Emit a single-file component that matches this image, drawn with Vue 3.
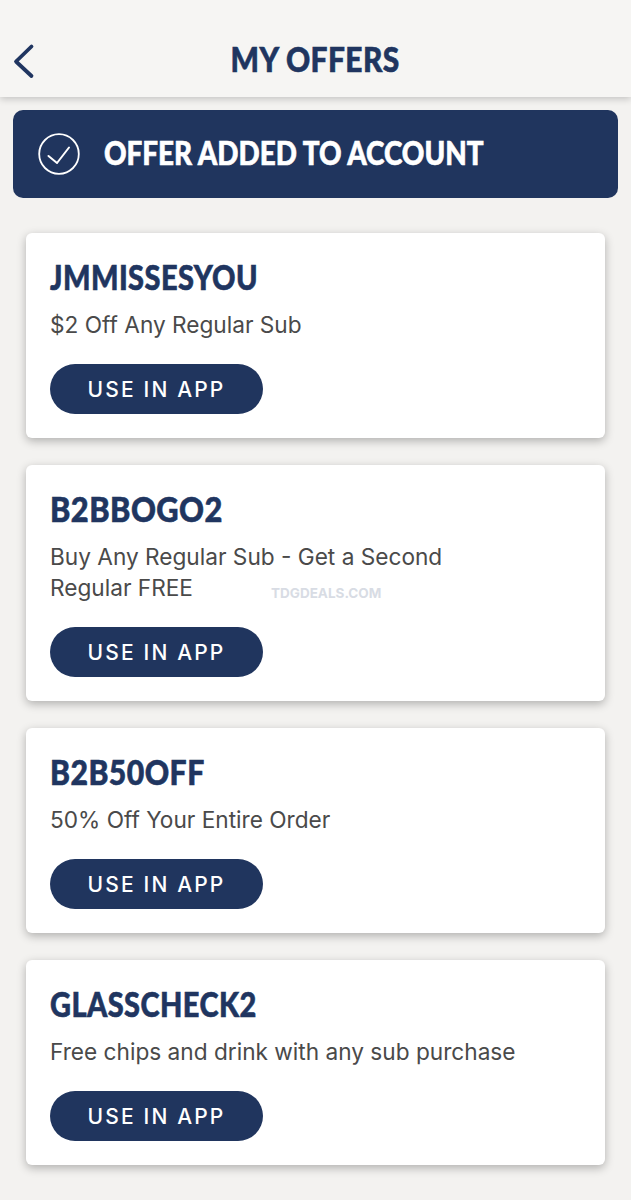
<script setup>
// title font is wider than the original, so each code gets its own squeeze
const offers = [
  { code: 'JMMISSESYOU', text: '$2 Off Any Regular Sub', squeeze: 0.852 },
  { code: 'B2BBOGO2', text: 'Buy Any Regular Sub - Get a Second Regular FREE', squeeze: 0.905, mark: true },
  { code: 'B2B50OFF', text: '50% Off Your Entire Order', squeeze: 0.887 },
  { code: 'GLASSCHECK2', text: 'Free chips and drink with any sub purchase', squeeze: 0.852 }
]
</script>

<template>
  <div class="page">
    <header class="top">
      <button class="back" aria-label="Back">
        <svg width="24" height="36" viewBox="0 0 24 36">
          <path d="M20.5 3.5 L5 18.5 L20.5 33" fill="none" stroke="#203560" stroke-width="3.8" stroke-linecap="round" stroke-linejoin="round" />
        </svg>
      </button>
      <h1>MY OFFERS</h1>
    </header>

    <div class="banner">
      <svg width="42" height="42" viewBox="0 0 42 42">
        <circle cx="21" cy="21" r="19.8" fill="none" stroke="#fff" stroke-width="1.8" />
        <path d="M10.5 23 L19 30 L31 14.5" fill="none" stroke="#fff" stroke-width="2" stroke-linecap="round" stroke-linejoin="round" />
      </svg>
      <span>OFFER ADDED TO ACCOUNT</span>
    </div>

    <div class="list">
      <div v-for="o in offers" :key="o.code" class="card">
        <h2 :style="{ transform: `scaleX(${o.squeeze})` }">{{ o.code }}</h2>
        <p>{{ o.text }}</p>
        <button class="use">USE IN APP</button>
        <span v-if="o.mark" class="mark">TDGDEALS.COM</span>
      </div>
    </div>
  </div>
</template>

<style scoped>
.page {
  width: 631px;
  height: 1200px;
  background: #f3f2f0;
  overflow: hidden;
  font-family: Inter, "Liberation Sans", sans-serif;
}

.top {
  height: 97px;
  background: #f6f5f3;
  box-shadow: 0 2px 7px rgba(0, 0, 0, 0.2);
  display: flex;
  align-items: flex-end;
  justify-content: center;
  padding-bottom: 18px;
  box-sizing: border-box;
  position: relative;
}

.top h1 {
  margin: 0;
  font-family: Lato, sans-serif;
  font-weight: 900;
  font-size: 34px;
  line-height: 40px;
  color: #203560;
  letter-spacing: 0.5px;
  -webkit-text-stroke: 0.6px #203560;
  transform: scaleX(0.88);
}

.back {
  position: absolute;
  left: 11px;
  top: 43px;
  padding: 0;
  border: 0;
  background: none;
  display: flex;
}

.banner {
  margin: 13px 13px 0;
  height: 88px;
  background: #20355e;
  border-radius: 10px;
  display: flex;
  align-items: center;
  padding-left: 25px;
  gap: 24px;
}

.banner span {
  font-family: Lato, sans-serif;
  font-weight: 900;
  font-size: 32px;
  line-height: 36px;
  margin-top: -2px;
  color: #fff;
  white-space: nowrap;
  -webkit-text-stroke: 0.6px #fff;
  transform: scaleX(0.87);
  transform-origin: left center;
}

.list {
  margin: 35px 26px 0;
  display: flex;
  flex-direction: column;
  gap: 27px;
}

.card {
  position: relative;
  background: #fff;
  border-radius: 6px;
  box-shadow: 0 3px 10px rgba(0, 0, 0, 0.28);
  padding: 24px 24px 24px;
}

.card h2 {
  margin: 0;
  font-family: Lato, sans-serif;
  font-weight: 900;
  font-size: 34px;
  line-height: 40px;
  letter-spacing: 0.5px;
  color: #203560;
  white-space: nowrap;
  -webkit-text-stroke: 0.6px #203560;
  transform-origin: left center;
}

.card p {
  margin: 12px 0 0;
  max-width: 470px;
  font-size: 22.65px;
  line-height: 31px;
  color: #4a4a4a;
}

.use {
  display: block;
  margin-top: 24px;
  width: 213px;
  height: 50px;
  border: 0;
  border-radius: 25px;
  background: #20355e;
  color: #fff;
  font-family: Inter, "Liberation Sans", sans-serif;
  font-size: 21px;
  font-weight: 500;
  letter-spacing: 2.15px;
}

.mark {
  position: absolute;
  left: 245px;
  top: 120px;
  font-size: 13.5px;
  font-weight: 700;
  color: #d8dce4;
}
</style>
